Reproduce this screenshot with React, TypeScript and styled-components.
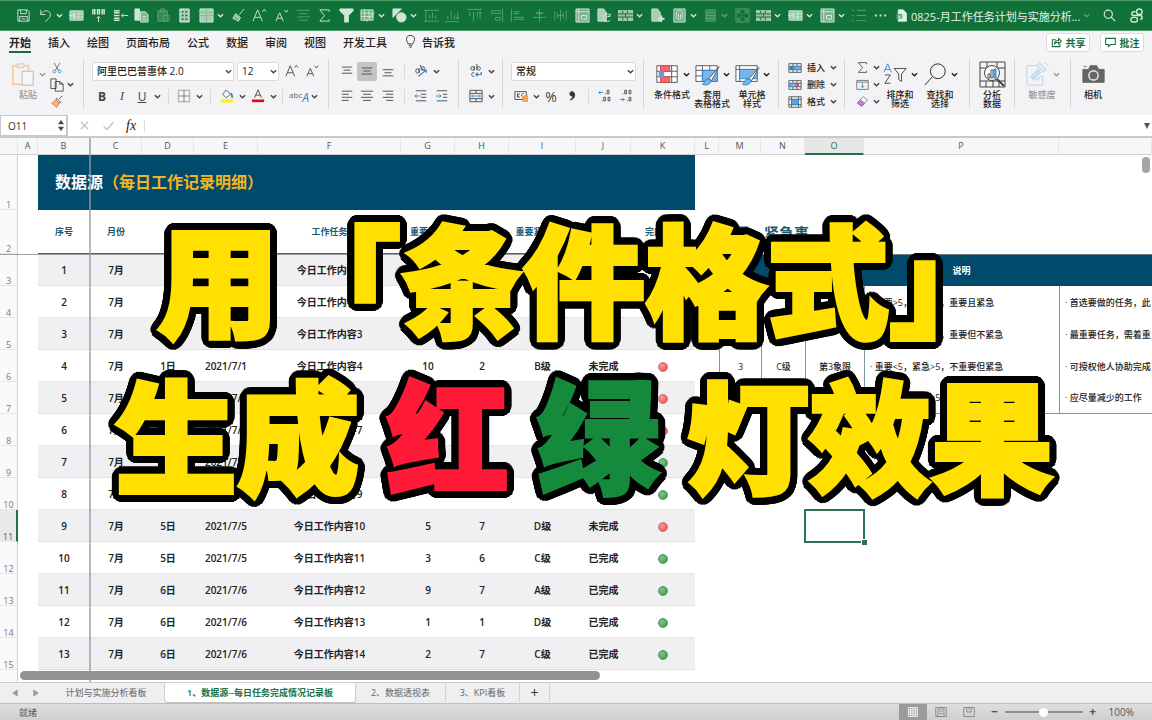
import React, { ReactNode } from 'react';
import styled, { createGlobalStyle, css } from 'styled-components';

const sans = `"Open Sans", "Noto Sans CJK SC", sans-serif`;
const green = '#117239';
const navy = '#004b6b';

const GlobalStyle = createGlobalStyle`
  * { box-sizing: border-box; }
  body { margin: 0; font-family: ${sans}; font-size: 10px; color: #222; background: #fff; }
  button { border: 0; padding: 0; margin: 0; background: none; font: inherit; color: inherit; }
  svg { display: block; flex: none; }
`;

/* ---------- glyphs ---------- */

const grid = 'M1 3h14v10H1zM1 6.3h14M1 9.6h14M5.6 3v10M10.3 3v10';

const glyphs: Record<string, ReactNode> = {
  save: <path d="M2 2h10l2 2v10H2zM5 2v4h6V2M4 14V9h8v5M6 11.500h4" />,
  undo: <path d="M3 2v5h5M3 7c2-4 6-5 8.500-3s2 5 0 7L8 14.500" />,
  gridIn: <><path d={grid} fill="currentColor" fillOpacity=".7" /><path d="M0 8h7" /></>,
  pivotUp: <><path d="M2 1v6M4 1v6M7 1v6M9 1v6M12 1v6M14 1v6" strokeWidth="1.600" /><path d="M8 15V9M6 11l2-2 2 2" /></>,
  rowsLeft: <><path d="M1 3h6M1 5h6M1 8h6M1 11h6M1 13h6" strokeWidth="1.600" /><path d="M16 8H9M11 6L9 8l2 2" /></>,
  copy: <><path d="M1 1h5v12H1z" fill="currentColor" /><path d="M7 4h5l3 3v8H7zM9 9h4M9 12h4" fill="currentColor" fillOpacity=".6" /></>,
  clip: <><path d="M2 3h10v11H2z" fill="currentColor" fillOpacity=".5" /><path d="M5 1h4v3H5zM8 8h6v6H8z" /></>,
  sheet: <><path d="M3 1h10v14H3z" fill="currentColor" fillOpacity=".8" /><path d="M5 4h2M9 4h2M5 8h2M9 8h2M5 12h2M9 12h2" stroke="#117239" strokeWidth="1.500" /></>,
  table: <><path d="M1 1h14v14H1z" fill="currentColor" fillOpacity=".8" /><path d="M8 1v14M1 8h14M1 4.500h14" stroke="#8fc2a3" /></>,
  brush: <path d="M14 1L9 7M5 6l5 4-2 4-6-3zM4 8l5 3" fill="currentColor" fillOpacity=".5" />,
  aUp: <><path d="M1 14L6 2l5 12M3 10h6" /><path d="M11 4l2-2.500L15 4" /></>,
  aDown: <><path d="M2 14l4-9 4 9M3.500 11h5" /><path d="M11 2l2 2.500L15 2" /></>,
  center: <path d="M1 2.500h14M3.500 6h9M1 9.500h14M3.500 13h9" />,
  left: <path d="M2 2.500h12M2 6h8M2 9.500h12M2 13h8" />,
  right: <path d="M2 2.500h12M6 6h8M2 9.500h12M6 13h8" />,
  vTop: <path d="M2 3.500h12M4 7h8M2 10.500h12" />,
  vMid: <path d="M2 4.500h12M4 8h8M2 11.500h12" />,
  vBot: <path d="M2 6.500h12M4 10h8M2 13.500h12" />,
  sigma: <path d="M13 4V2H3l5 6-5 6h10v-2" />,
  funnel: <path d="M1 1h14v2L10 8v7H6V8L1 3z" fill="currentColor" />,
  gridPen: <><path d="M1 2h13v11H1zM1 5.500h13M1 9h13M5 2v11M9.500 2v11" fill="currentColor" fillOpacity=".5" /><path d="M15 5l-6 8-2 1 1-2z" fill="#117239" /></>,
  shapes: <><path d="M1 1h9L1 10z" fill="currentColor" /><circle cx="10" cy="10" r="5" fill="currentColor" /></>,
  chartA: <path d="M0 2.500h16M0 14h16M2 2v12M6 11V7M9 11V5M12 11V8" />,
  chartB: <path d="M0 14.500h15M3 12V9M6.500 12V3M10 12V7M13.500 5v7M12 10l1.500 2L15 10" />,
  chartC: <path d="M0 1.500h16M3 4v5M7 4v10M11 4v6M14 12V4M12.500 6L14 4l1.500 2" />,
  alignR: <path d="M14.500 1v14M3 3h9v3H3zM7 10h5v3H7z" />,
  alignL: <path d="M1.500 1v14M4 4h6M4 6h6M4 10h11M4 12h11" />,
  alignC: <path d="M8 1v14M4 5h8M1 10h14M4 6h8" />,
  distV: <path d="M2 3v10M14 3v10M8 2v12M5 5v6M11 5v6M5 8h6" />,
  pivot: <><path d="M1 1h14v14H1z" fill="currentColor" fillOpacity=".55" /><path d="M1 4h14M4 1v14" /><path d="M7 12V8h4M12 7v5H8" stroke="#fff" /></>,
  docRefresh: <><path d="M1 1h6l3 4v9H1z" fill="currentColor" fillOpacity=".8" /><path d="M14 8a4 4 0 1 0 0 5M14 6v3h-3" /></>,
  gridBand: <><path d="M0 3h16v10H0z" fill="currentColor" fillOpacity=".7" /><path d="M0 6.300h16M0 9.600h16M5 3v3M10 3v3M8 6v4M5 10v3M10 10v3" stroke="#117239" /></>,
  docAdd: <><path d="M2 1h6l3 4v9H2z" fill="currentColor" fillOpacity=".8" /><path d="M12 8v7M8.500 11.500h7" strokeWidth="2" /></>,
  db: <><path d="M2 1h12v14H2z" fill="currentColor" fillOpacity=".5" /><path d="M5 4c0-1.500 6-1.500 6 0v7c0 1.500-6 1.500-6 0zM7 6v5M9 6v5" /></>,
  lines: <path d="M3 2h10v12H3zM3 5h10M3 8h10M3 11h10" fill="currentColor" fillOpacity=".5" />,
  expand: <path d="M1 1h14v14H1zM3 3l4 4M13 3L9 7M3 13l4-4M13 13L9 9M3 6V3h3M10 3h3v3M3 10v3h3M10 13h3v-3" />,
  list: <path d="M1 2.500h2M6 2.500h10M1 8h2M6 8h10M1 13.500h2M6 13.500h10" />,
  dots: <path d="M2 8h2M7 8h2M12 8h2" strokeWidth="2" />,
  search: <><circle cx="6.500" cy="6.500" r="5" /><path d="M10 10l5 5" /></>,
  shareUser: <><circle cx="11" cy="4" r="3" /><rect x="2" y="10" width="7" height="5" rx="2.500" /><path d="M7 4H5a2 2 0 0 0 0 4h7a2 2 0 0 1 0 4" /></>,
  file: <><path d="M4 1h6l4 4v10H4z" fill="currentColor" /><path d="M2 6h7v6H2z" fill="#5fa77b" stroke="none" /><path d="M4 8l3 3M7 8l-3 3" stroke="#fff" /></>,
  bulb: <path d="M5 11c0-2-2-3-2-5.500a5 5 0 0 1 10 0C13 8 11 9 11 11zM6 13h4M6.500 15h3" />,
  share: <path d="M7 4H2v10h11v-4M5 10c0-3 2-5 6-5V2l4 4-4 4V7.500c-3 0-4.500.500-6 2.500z" />,
  comment: <path d="M1 2h14v9H8l-3 3v-3H1z" />,
  cut: <><path d="M4 1l6 10M12 1L6 11" stroke="#555" /><circle cx="4.500" cy="12.500" r="2" stroke="#2f86c5" /><circle cx="11.500" cy="12.500" r="2" stroke="#2f86c5" /></>,
  pages: <path d="M1 1h6v11H1zM6 4h5l4 3v8H6zM11 4v3h4" fill="#f5f5f5" />,
  painter: <><path d="M14 1l-4 4M7 4l5 5-2 1-4-4z" /><path d="M6 6l4 4-3 5-6-5z" fill="#f6b77b" stroke="#d9701f" /></>,
  border: <><path d="M1.500 1.500h13v13h-13z" stroke="#999" /><path d="M8 1.500v13M1.500 8h13" stroke="#777" /></>,
  bucket: <><path d="M7 1l5 5-5 4-4-4z" stroke="#555" /><path d="M12 5c2 1 2 3 2 5" stroke="#2f86c5" strokeWidth="2" /><path d="M1 13.500h14" stroke="#ffef1f" strokeWidth="4" /></>,
  fontColor: <><path d="M4 10l4-9 4 9M5.500 7h5" /><path d="M1 13.500h14" stroke="#e00b12" strokeWidth="3" /></>,
  orient: <><ellipse cx="4" cy="8" rx="2" ry="2.500" /><path d="M6 5v5M7 1l3 6" /><circle cx="10" cy="5" r="2" /><path d="M5 14l9-7M14 10V7h-3" stroke="#2f86c5" strokeWidth="1.400" /></>,
  outdent: <><path d="M2 2h12M8 6h6M8 9.500h6M2 13.500h12" /><path d="M7 8H1M3 6L1 8l2 2" stroke="#2f86c5" /></>,
  indent: <><path d="M2 2h12M9 6h5M9 9.500h5M2 13.500h12" /><path d="M1 8h6M5 6l2 2-2 2" stroke="#2f86c5" /></>,
  wrap: <><circle cx="4" cy="5" r="2" /><path d="M6 2.500v5M9 0v7M6 10c-4-1-4 5 0 4" /><circle cx="11" cy="5" r="2" /><path d="M14 9v3H8M10 10l-2 2 2 2" stroke="#2f86c5" strokeWidth="1.400" /></>,
  merge: <><path d="M1 1.500h14v13H1zM1 5h14M1 11h14M8 1.500V5M8 11v3" /><path d="M2.500 8h11M4.500 6.500L3 8l1.500 1.500M11.500 6.500L13 8l-1.500 1.500" stroke="#2f86c5" /></>,
  currency: <><path d="M1 3h13v9H1zM4 5v5M4 7.500L7 5M4 7.500L7 10M11 5c-3 0-3 4 0 4" /><path d="M10 8h6v6h-6zM10 11h6" fill="#f6b77b" stroke="#e58a3c" /></>,
  comma: <path d="M8 3a2.500 2.500 0 0 0 0 5c1 0 1 0 1-.5C9 10 8 11 6 12.500c4-1 5-3.500 5-6C11 4.500 10 3 8 3z" fill="#333" stroke="#333" />,
  decInc: <><path d="M6 4H1M3 2L1 4l2 2" stroke="#2f86c5" /><path d="M10.500 1.500h2v4h-2zM6.500 9.500h2v4h-2zM11.500 9.500h2v4h-2zM4 13.500h1M8 5.500h1" /></>,
  decDec: <><path d="M1 12h5M4 10l2 2-2 2" stroke="#2f86c5" /><path d="M6.500 1.500h2v4h-2zM11.500 1.500h2v4h-2zM11.500 9.500h2v4h-2zM4 5.500h1M9 13.500h1" /></>,
  paste: <><path d="M2 4h17v20H2z" stroke="#f0cfa6" strokeWidth="2" fill="#f7f4f0" /><path d="M7 2h7v4H7z" stroke="#c9c9c9" fill="#eee" /><path d="M12 10h12v15H12z" stroke="#b5b5b5" fill="#f6f6f6" /></>,
  condFmt: <><path d="M2 4h22v18H2zM2 10h22M2 16h22M8 4v18M18 4v18" stroke="#555" fill="#fff" /><path d="M6 4h10v6H6zM6 16h10v6H6z" fill="#f0696c" stroke="#dd4347" /><path d="M4 10h6v6H4z" fill="#5ea0dd" stroke="none" /></>,
  tblFmt: <><path d="M1 4h23v17H1zM1 9h23M1 15h23M8 4v17M16 4v17" stroke="#555" fill="#fff" /><path d="M8 9h16v12H8z" fill="#78b5ec" stroke="#2f86c5" /><path d="M26 5L15 18l3 2z" fill="#fff" stroke="#555" /><path d="M14 18c-4 0-3 5-6 6 5 2 9 0 9-4z" fill="#78b5ec" stroke="#2f86c5" /></>,
  cellFmt: <><path d="M1 4h23v17H1zM1 8h23M5 4v17" stroke="#555" fill="#fff" /><path d="M5 8h19v10H5z" fill="#78b5ec" stroke="#2f86c5" /><path d="M26 6L15 18l3 2z" fill="#fff" stroke="#555" /><path d="M14 18c-4 0-3 5-6 6 5 2 9 0 9-4z" fill="#78b5ec" stroke="#2f86c5" /></>,
  cellIns: <><path d={grid} stroke="#555" /><path d="M2 6h12v4H2z" fill="#78b5ec" stroke="#2f86c5" /><path d="M8 8H3M5 6L3 8l2 2" stroke="#165c94" /></>,
  cellDel: <><path d={grid} stroke="#555" /><path d="M2 6h7v4H2z" fill="#78b5ec" stroke="#2f86c5" /><path d="M9 5l5 6M14 5l-5 6" stroke="#e0393e" /></>,
  cellFit: <><path d="M1 2h14v12H1zM4 2v12M12 2v12M1 5h14M1 11h14" stroke="#555" /><path d="M4 5h8v6H4z" fill="#5ea0dd" stroke="#2f86c5" /></>,
  fillDown: <><path d="M1 3h14v11H1zM1 5h14" stroke="#666" /><path d="M8 6v6M6 10l2 2 2-2" stroke="#2f86c5" /></>,
  eraser: <><path d="M9 2l5 4-7 8-5-4z" fill="#fff" stroke="#a14bb0" /><path d="M5.500 6l5 4L7 14l-5-4z" fill="#c583cf" stroke="#a14bb0" /></>,
  sortFilter: <><path d="M1 11L5 2l4 9M2.500 8h5" stroke="#2f86c5" /><path d="M2 14h6L2 23h6" stroke="#444" /><path d="M12 7h13l-5 6v8l-3-2v-6z" stroke="#444" /></>,
  find: <><circle cx="16" cy="10" r="8" /><path d="M10 16L2 25" /></>,
  analyse: <><path d="M1 1h25v25H1zM1 7h25M1 20h25M8 1v6M18 1v6M7 20v6M14 20v6M20 20v6" stroke="#444" /><circle cx="13" cy="12" r="7.500" fill="#fff" stroke="#444" /><path d="M18 18l7 7" stroke="#444" strokeWidth="2" /><path d="M9 13h2v4H9zM12 9h2v8h-2z" stroke="#555" /><path d="M15 8h2v9h-2z" fill="#78b5ec" stroke="#2f86c5" /></>,
  sens: <g stroke="#b5cfe0"><path d="M19 4H2v21h17V14" stroke="#bdd3e2" /><path d="M6 16l8-8 3 3-8 8z" fill="#cfe2f0" /><path d="M13 4l3-3 7 7-3 3zM22 1l3 3M10 17l3 3 5-5" fill="#dfecf5" /></g>,
  camera: <><path d="M2 8h6l2-4h7l2 4h6v14H2z" fill="#666" stroke="#666" strokeLinejoin="round" /><circle cx="13.500" cy="14.500" r="5" fill="#666" stroke="#f2f2f2" strokeWidth="1.500" /><path d="M3 5h3" stroke="#666" /></>,
  x: <path d="M3.500 3.500l9 9M12.500 3.500l-9 9" />,
  check: <path d="M2 9l4 4 8-9" />,
  prev: <path d="M11 4v8L5 8z" fill="currentColor" />,
  next: <path d="M5 4v8l6-4z" fill="currentColor" />,
  viewGrid: <path d="M2 2h12v12H2zM2 5h12M2 8h12M2 11h12M5 2v12M8 2v12M11 2v12" />,
  viewPage: <path d="M1 2h14v12H1zM4 4h8v10M4 4v10M6 7h4M6 10h4" />,
  viewBreak: <path d="M1 2h14v12H1zM5 2v6h6V2M8 2v3" />,
};

const Glyph = ({ name, size = 16, box = 16, weight = 1 }: { name: string; size?: number; box?: number; weight?: number }) => (
  <svg width={size} height={size} viewBox={`0 0 ${box} ${box}`} fill="none" stroke="currentColor" strokeWidth={weight} aria-hidden="true">
    {glyphs[name]}
  </svg>
);

const Chevron = ({ size = 7 }: { size?: number }) => (
  <svg width={size} height={size} viewBox="0 0 8 8" fill="none" stroke="currentColor" strokeWidth="1.600" aria-hidden="true">
    <path d="M1 2.500l3 3 3-3" />
  </svg>
);

/* ---------- window ---------- */

const Window = styled.div`
  position: relative;
  display: flex;
  flex-direction: column;
  height: 100vh;
  overflow: hidden;
`;

const TitleBar = styled.header`
  display: flex;
  align-items: center;
  flex: none;
  height: 31px;
  padding: 0 8px 0 16px;
  background: ${green};
  border-top: 1px solid #4d9a6b;
  border-bottom: 1px solid #4d9a6b;
  color: #e4f3ea;
`;

const QuickTools = styled.div`
  display: flex;
  flex: 1;
  max-width: 872px;
  align-items: center;
  justify-content: space-between;
`;

const Tool = styled.button<{ $dim?: boolean }>`
  display: flex;
  align-items: center;
  gap: 3px;
  opacity: ${(p) => (p.$dim ? 0.35 : 0.9)};
`;

const DocTitle = styled.div`
  display: flex;
  align-items: center;
  gap: 3px;
  margin-left: 7px;
  font-size: 11px;
  white-space: nowrap;
`;

const TitleActions = styled.div`
  display: flex;
  align-items: center;
  gap: 13px;
  margin-left: auto;
`;

const TabBar = styled.nav`
  display: flex;
  align-items: center;
  flex: none;
  gap: 17px;
  height: 25px;
  padding: 0 8px 2px 9px;
  background: #f4f3f5;
  font-size: 11px;
  font-weight: 500;
`;

const Tab = styled.button<{ $active?: boolean }>`
  display: flex;
  align-items: center;
  gap: 5px;
  height: 21px;
  border-bottom: 2px solid ${(p) => (p.$active ? '#1c6b3c' : 'transparent')};
  font-weight: ${(p) => (p.$active ? 700 : 500)};
  white-space: nowrap;
`;

const TabActions = styled.div`
  display: flex;
  gap: 10px;
  margin-left: auto;
`;

const Pill = styled.button`
  display: flex;
  align-items: center;
  justify-content: center;
  gap: 4px;
  width: 44px;
  height: 19px;
  border: 1px solid #dcdcdc;
  border-radius: 3px;
  background: #fff;
  color: #1c6b3c;
  font-size: 10px;
  font-weight: 700;
`;

const Ribbon = styled.div`
  display: flex;
  flex: none;
  height: 59px;
  background: #f3f2f4;
  color: #444;
`;

const Group = styled.div<{ $w: number; $last?: boolean }>`
  display: flex;
  flex: none;
  width: ${(p) => p.$w}px;
  height: 49px;
  margin-top: 3px;
  padding-left: 8px;
  ${(p) => !p.$last && 'border-right: 1px solid #d6d5d8;'}
`;

const Rows = styled.div`
  display: flex;
  flex-direction: column;
  gap: 1px;
`;

const Row = styled.div`
  display: flex;
  align-items: center;
  height: 24px;
`;

const TripleRows = styled.div`
  display: flex;
  flex-direction: column;
`;

const TripleRow = styled.div`
  display: flex;
  align-items: center;
  height: 17px;
`;

const Slot = styled.button<{ $w: number; $pressed?: boolean }>`
  display: flex;
  align-items: center;
  justify-content: center;
  flex: none;
  width: ${(p) => p.$w}px;
  height: 19px;
  font-size: 12px;
  ${(p) => p.$pressed && css`background: #c4c3c6; border-radius: 2px;`}
`;

const Mark = styled.span<{ $italic?: boolean; $under?: boolean; $bold?: boolean }>`
  font-style: ${(p) => (p.$italic ? 'italic' : 'normal')};
  font-weight: ${(p) => (p.$bold ? 700 : 400)};
  text-decoration: ${(p) => (p.$under ? 'underline' : 'none')};
  font-family: ${(p) => (p.$italic ? '"Liberation Serif", serif' : sans)};
  font-size: 12px;
`;

const Percent = styled(Mark)`
  font-size: 14px;
`;

const Abc = styled.span`
  display: flex;
  font-size: 8px;
  line-height: 12px;
  color: #666;
  em {
    color: #2f86c5;
    font-size: 12px;
    padding-top: 3px;
  }
`;

const Divider = styled.span<{ $w: number }>`
  flex: none;
  width: 1px;
  height: 15px;
  margin: 0 ${(p) => p.$w}px;
  background: #d9d8da;
`;

const Picker = styled.label<{ $w: number }>`
  position: relative;
  display: block;
  flex: none;
  width: ${(p) => p.$w}px;
  margin-right: 3px;
  select {
    appearance: none;
    width: 100%;
    height: 19px;
    padding: 0 4px;
    border: 1px solid #dad9dc;
    border-radius: 2px;
    background: #fff;
    color: #222;
    font: 500 10px ${sans};
  }
  svg {
    position: absolute;
    right: 2px;
    top: 6px;
  }
`;

const BigButton = styled.button<{ $w: number; $dim?: boolean }>`
  display: flex;
  flex-direction: column;
  align-items: center;
  flex: none;
  width: ${(p) => p.$w}px;
  font-size: 9px;
  font-weight: 500;
  line-height: 9px;
  color: ${(p) => (p.$dim ? '#999' : '#222')};
  white-space: nowrap;
`;

const BigIcon = styled.span`
  display: flex;
  align-items: center;
  gap: 3px;
  height: 31px;
`;

const SmallLabel = styled.span`
  margin: 0 5px 0 4px;
  font-size: 9px;
  font-weight: 500;
  color: #222;
`;

const FormulaBar = styled.div`
  display: flex;
  align-items: center;
  flex: none;
  height: 23px;
  border-bottom: 2px solid #c9c9cb;
  background: #fff;
  color: #bbb;
`;

const NameBox = styled.label`
  display: flex;
  align-items: center;
  width: 68px;
  height: 21px;
  border: 1px solid #c9c9cb;
  border-right-width: 2px;
  color: #333;
  input {
    width: 57px;
    border: 0;
    padding: 0 0 0 7px;
    font: 500 10px ${sans};
    color: #333;
    outline: 0;
  }
`;

const Fx = styled.span`
  width: 18px;
  font: italic 400 14px "Liberation Serif", serif;
  color: #222;
`;

const FormulaInput = styled.input`
  flex: 1;
  height: 12px;
  border: 0;
  border-left: 1px solid #ddd;
  outline: 0;
`;

/* ---------- sheet ---------- */

const SheetArea = styled.main`
  position: relative;
  flex: 1;
  min-height: 0;
  overflow: hidden;
  background: #fff;
`;

const Sheet = styled.table`
  width: 100%;
  table-layout: fixed;
  border-collapse: separate;
  border-spacing: 0;
  font-size: 10px;
  font-weight: 600;
  td, th {
    padding: 0;
    overflow: hidden;
    white-space: nowrap;
    text-align: center;
  }
`;

const ColHead = styled.th<{ $on?: boolean }>`
  height: 17px;
  border-right: 1px solid #e6e5e7;
  border-bottom: ${(p) => (p.$on ? `2px solid #217346` : '1px solid #cfced0')};
  background: ${(p) => (p.$on ? '#e6e6e7' : '#f7f6f8')};
  color: ${(p) => (p.$on ? '#217346' : '#555')};
  font-size: 9px;
  font-weight: 500;
  line-height: 14px;
`;

const RowHead = styled.th<{ $on?: boolean }>`
  border-right: ${(p) => (p.$on ? '2px solid #217346' : '1px solid #cfced0')};
  border-bottom: 1px solid #e6e5e7;
  background: ${(p) => (p.$on ? '#e9e9ea' : '#fafafa')};
  color: ${(p) => (p.$on ? '#217346' : '#777')};
  vertical-align: bottom;
  font-size: 9px;
  font-weight: 400;
  line-height: 9px;
`;

const SheetRow = styled.tr<{ $h: number }>`
  height: ${(p) => p.$h}px;
`;

const TitleCell = styled.td`
  && {
    padding: 0 0 4px 17px;
    text-align: left;
  }
  background: ${navy};
  color: #fff;
  font-size: 16px;
  font-weight: 700;
  span { color: #f2b41f; }
`;

const FieldHead = styled.th`
  border-bottom: 1px solid #4c6673;
  color: #1c5872;
  font-size: 9px;
  font-weight: 700;
`;

const Cell = styled.td<{ $shade?: boolean }>`
  border-bottom: 1px solid #e3e3e5;
  background: ${(p) => (p.$shade ? '#f0f0f3' : '#fff')};
`;

const GuideTitle = styled.td`
  && { text-align: left; overflow: visible; }
  color: #1c5872;
  font-size: 15px;
  font-weight: 700;
`;

const GuideHead = styled.th`
  background: ${navy};
  color: #fff;
  font-size: 9px;
  font-weight: 700;
`;

const GuideCell = styled.td<{ $note?: boolean; $end?: boolean }>`
  border-left: 1px solid #7c98a8;
  ${(p) => p.$end && 'border-bottom: 1px solid #7c98a8;'}
  ${(p) => p.$note && '&& { text-align: left; padding-left: 5px; }'}
  font-size: 9px;
  font-weight: 500;
`;

const ActiveCell = styled.td`
  && { overflow: visible; }
  position: relative;
  &::before {
    content: '';
    position: absolute;
    inset: -1px;
    border: 2px solid #2f7553;
  }
  &::after {
    content: '';
    position: absolute;
    right: -3px;
    bottom: -3px;
    width: 5px;
    height: 5px;
    background: #2f7553;
    border: 1px solid #fff;
    border-width: 1px 0 0 1px;
  }
`;

const Light = styled.span<{ $done: boolean }>`
  display: inline-block;
  width: 10px;
  height: 10px;
  border-radius: 50%;
  border: 1px solid ${(p) => (p.$done ? '#4a9c5d' : '#d9696d')};
  background: ${(p) => (p.$done ? 'radial-gradient(circle at 35% 35%, #7cc48a, #2f9a4b)' : 'radial-gradient(circle at 35% 35%, #f79a9b, #e5484d)')};
  vertical-align: middle;
`;

const FreezeV = styled.i`
  position: absolute;
  left: 89px;
  top: 0;
  bottom: 0;
  width: 2px;
  background: rgba(150, 152, 158, 0.7);
`;

const FreezeH = styled.i`
  position: absolute;
  left: 0;
  right: 0;
  top: 116px;
  height: 1px;
  background: rgba(130, 138, 144, 0.8);
`;

const ScrollX = styled.i`
  position: absolute;
  left: 20px;
  bottom: 2px;
  width: 580px;
  height: 9px;
  border-radius: 5px;
  background: #939394;
`;

const ScrollY = styled.i`
  position: absolute;
  right: 2px;
  top: 19px;
  width: 8px;
  height: 16px;
  border-radius: 4px;
  background: #a4a4a6;
`;

const SheetTabs = styled.div`
  display: flex;
  flex: none;
  height: 21px;
  padding-left: 6px;
  border-top: 1px solid #cdcdcf;
  background: #efeef0;
  color: #999;
`;

const SheetTab = styled.button<{ $w: number; $active?: boolean }>`
  width: ${(p) => p.$w}px;
  height: 19px;
  border-right: 1px solid #d2d2d4;
  background: ${(p) => (p.$active ? '#fff' : 'transparent')};
  color: ${(p) => (p.$active ? '#217346' : '#666')};
  font-size: 9px;
  font-weight: ${(p) => (p.$active ? 600 : 400)};
  white-space: nowrap;
  ${(p) => p.$active && 'border-radius: 0 0 3px 3px; box-shadow: 0 1px 1px #bbb;'}
`;

const AddTab = styled(SheetTab)`
  color: #333;
  font-size: 14px;
  line-height: 14px;
`;

const StatusBar = styled.footer`
  display: flex;
  align-items: center;
  flex: none;
  height: 17px;
  padding: 0 18px 0 19px;
  border-top: 1px solid #bdbdbf;
  background: linear-gradient(#dededf, #cfcfd0);
  color: #555;
  font-size: 9px;
`;

const Views = styled.div`
  display: flex;
  margin-left: auto;
`;

const ViewButton = styled.button<{ $on?: boolean }>`
  display: flex;
  align-items: center;
  justify-content: center;
  width: 28px;
  height: 16px;
  background: ${(p) => (p.$on ? '#9b9b9d' : 'transparent')};
  color: ${(p) => (p.$on ? '#fff' : '#777')};
`;

const Zoom = styled.div`
  display: flex;
  align-items: center;
  gap: 6px;
  margin-left: 8px;
  font-size: 10px;
  input {
    appearance: none;
    width: 78px;
    height: 2px;
    margin: 0;
    background: #8f8f91;
  }
  input::-webkit-slider-thumb {
    appearance: none;
    width: 9px;
    height: 9px;
    border-radius: 50%;
    background: #fff;
  }
  output { margin-left: 6px; }
`;

const ZoomStep = styled.button`
  width: 8px;
  font-size: 12px;
  font-weight: 700;
  line-height: 12px;
`;

/* ---------- headline ---------- */

const ring = (radius: number, steps: number) => Array.from({ length: steps }, (_, i) => {
  const a = (i * 2 * Math.PI) / steps;
  return `${Math.round(Math.cos(a) * radius * 10) / 10}px ${Math.round(Math.sin(a) * radius * 10) / 10}px 0 #000`;
}).join(', ');

const Headline = styled.h1`
  position: absolute;
  top: 197px;
  left: 0;
  right: 0;
  margin: 0;
  padding-left: 16px;
  color: #ffe000;
  font-family: "Noto Sans CJK SC", sans-serif;
  font-size: 122px;
  font-weight: 900;
  line-height: 156px;
  text-align: center;
  white-space: nowrap;
  -webkit-text-stroke: 4px currentColor;
  text-shadow: ${ring(9, 48)}, ${ring(5, 24)};
  pointer-events: none;
`;

const HeadLine = styled.span`
  display: block;
`;

const Tint = styled.span<{ $c: string }>`
  color: ${(p) => p.$c};
`;

/* ---------- data ---------- */

const tools: [string, boolean?, boolean?][] = [
  ['save'], ['undo', true], ['gridIn'], ['pivotUp'], ['rowsLeft'], ['copy'], ['clip', false, true], ['sheet'], ['table', true],
  ['brush'], ['aUp'], ['aDown'], ['center', false, true], ['sigma'], ['funnel'], ['gridPen', true], ['shapes', true], ['chartA', false, true],
  ['chartB', false, true], ['chartC', false, true], ['alignR', false, true], ['alignL', false, true], ['alignC', false, true],
  ['distV', false, true], ['pivot'], ['docRefresh'], ['gridBand', true], ['docAdd'], ['db', true], ['lines', true, true],
  ['expand', false, true], ['gridBand', true], ['gridIn', true], ['pivot', true], ['list', false, true], ['dots'],
];

const tabs = ['开始', '插入', '绘图', '页面布局', '公式', '数据', '审阅', '视图', '开发工具'];

const cols: [string, number?][] = [
  ['A', 20], ['B', 52], ['C', 52], ['D', 52], ['E', 64], ['F', 143], ['G', 54], ['H', 54], ['I', 67], ['J', 55], ['K', 64],
  ['L', 24], ['M', 42], ['N', 44], ['O', 59], ['P', 195], ['', undefined],
];

const fields = ['序号', '月份', '', '', '工作任务', '重要程度', '', '重要紧急级别', '', '完成情况'];

const records: (string | boolean)[][] = [
  ['1', '7月', '', '', '今日工作内容1', '', '', '', '', ''],
  ['2', '7月', '', '', '今日工作内容2', '', '', '', '', ''],
  ['3', '7月', '', '', '今日工作内容3', '', '', '', '', ''],
  ['4', '7月', '1日', '2021/7/1', '今日工作内容4', '10', '2', 'B级', '未完成', false],
  ['5', '7月', '', '2021/7/2', '今日工作内容5', '', '', '', '', false],
  ['6', '7月', '', '2021/7/2', '今日工作内容7', '', '6', '', '', false],
  ['7', '7月', '', '2021/7/2', '今日工作内容8', '', '9', '', '', true],
  ['8', '7月', '', '2021/7/5', '今日工作内容9', '', '', '', '', true],
  ['9', '7月', '5日', '2021/7/5', '今日工作内容10', '5', '7', 'D级', '未完成', false],
  ['10', '7月', '5日', '2021/7/5', '今日工作内容11', '3', '6', 'C级', '已完成', true],
  ['11', '7月', '6日', '2021/7/6', '今日工作内容12', '9', '7', 'A级', '已完成', true],
  ['12', '7月', '6日', '2021/7/6', '今日工作内容13', '1', '1', 'D级', '已完成', true],
  ['13', '7月', '6日', '2021/7/6', '今日工作内容14', '2', '7', 'C级', '已完成', true],
];

const guide = [
  ['', '', '', '· 重要>5，紧急>5，重要且紧急', '· 首选要做的任务，此'],
  ['', '', '', '· 重要>5，紧急<5，重要但不紧急', '· 最重要任务，需着重'],
  ['3', 'C级', '第3象限', '· 重要<5，紧急>5，不重要但紧急', '· 可授权他人协助完成'],
  ['', '', '', '· 重要<5，紧急<5', '· 应尽量减少的工作'],
];

/* ---------- parts ---------- */

const IconSlot = ({ w, name, size = 14, pressed }: { w: number; name: string; size?: number; pressed?: boolean }) => (
  <Slot $w={w} $pressed={pressed} aria-label={name}><Glyph name={name} size={size} /></Slot>
);

const Drop = ({ w = 8 }: { w?: number }) => <Slot $w={w} aria-label="更多"><Chevron /></Slot>;

const Big = ({ w, name, lines, drop, dim, size = 25 }: { w: number; name: string; lines: string[]; drop?: boolean; dim?: boolean; size?: number }) => (
  <BigButton $w={w} $dim={dim}>
    <BigIcon><Glyph name={name} size={size} box={27} />{drop && <Chevron />}</BigIcon>
    {lines.map((l) => <span key={l}>{l}</span>)}
  </BigButton>
);

const RibbonBar = () => (
  <Ribbon>
    <Group $w={84}>
      <Big w={40} name="paste" lines={['粘贴']} drop dim />
      <TripleRows>
        <TripleRow><IconSlot w={18} name="cut" size={12} /></TripleRow>
        <TripleRow><IconSlot w={18} name="pages" /><Drop w={9} /></TripleRow>
        <TripleRow><IconSlot w={18} name="painter" size={13} /></TripleRow>
      </TripleRows>
    </Group>
    <Group $w={245}>
      <Rows>
        <Row>
          <Picker $w={142}><select aria-label="字体"><option>阿里巴巴普惠体 2.0</option></select><Chevron /></Picker>
          <Picker $w={42}><select aria-label="字号"><option>12</option></select><Chevron /></Picker>
          <IconSlot w={20} name="aUp" /><IconSlot w={20} name="aDown" />
        </Row>
        <Row>
          <Slot $w={20}><Mark $bold>B</Mark></Slot><Slot $w={20}><Mark $italic>I</Mark></Slot><Slot $w={20}><Mark $under>U</Mark></Slot>
          <Drop w={10} /><Divider $w={6} />
          <IconSlot w={18} name="border" /><Drop w={12} /><Divider $w={5} />
          <IconSlot w={22} name="bucket" /><Drop /><IconSlot w={23} name="fontColor" /><Drop /><Divider $w={5} />
          <Slot $w={22}><Abc>abc<em>A</em></Abc></Slot><Drop />
        </Row>
      </Rows>
    </Group>
    <Group $w={130}>
      <Rows>
        <Row>
          <IconSlot w={20} name="vTop" /><IconSlot w={20} name="vMid" pressed /><IconSlot w={22} name="vBot" />
          <Divider $w={5} /><IconSlot w={22} name="orient" /><Drop />
        </Row>
        <Row>
          <IconSlot w={20} name="left" /><IconSlot w={20} name="center" /><IconSlot w={22} name="right" />
          <Divider $w={5} /><IconSlot w={22} name="outdent" /><IconSlot w={20} name="indent" />
        </Row>
      </Rows>
    </Group>
    <Group $w={44}>
      <Rows>
        <Row><IconSlot w={18} name="wrap" /><Drop w={12} /></Row>
        <Row><IconSlot w={18} name="merge" /><Drop w={12} /></Row>
      </Rows>
    </Group>
    <Group $w={141}>
      <Rows>
        <Row><Picker $w={125}><select aria-label="数字格式"><option>常规</option></select><Chevron /></Picker></Row>
        <Row>
          <IconSlot w={20} name="currency" /><Drop w={10} /><Slot $w={20}><Percent>%</Percent></Slot>
          <IconSlot w={22} name="comma" /><Divider $w={5} />
          <IconSlot w={22} name="decInc" /><IconSlot w={20} name="decDec" />
        </Row>
      </Rows>
    </Group>
    <Group $w={135}>
      <Big w={40} name="condFmt" lines={['条件格式']} drop />
      <Big w={40} name="tblFmt" lines={['套用', '表格格式']} drop />
      <Big w={40} name="cellFmt" lines={['单元格', '样式']} drop />
    </Group>
    <Group $w={66}>
      <TripleRows>
        {[['cellIns', '插入'], ['cellDel', '删除'], ['cellFit', '格式']].map(([icon, label]) => (
          <TripleRow key={icon}><IconSlot w={16} name={icon} /><SmallLabel>{label}</SmallLabel><Chevron /></TripleRow>
        ))}
      </TripleRows>
    </Group>
    <Group $w={125}>
      <TripleRows>
        {['sigma', 'fillDown', 'eraser'].map((icon) => (
          <TripleRow key={icon}><IconSlot w={18} name={icon} size={13} /><Drop w={10} /></TripleRow>
        ))}
      </TripleRows>
      <Big w={38} name="sortFilter" lines={['排序和', '筛选']} drop />
      <Big w={42} name="find" lines={['查找和', '选择']} drop />
    </Group>
    <Group $w={45}><Big w={28} name="analyse" lines={['分析', '数据']} size={27} /></Group>
    <Group $w={56}><Big w={38} name="sens" lines={['敏感度']} drop dim /></Group>
    <Group $w={60} $last><Big w={28} name="camera" lines={['相机']} /></Group>
  </Ribbon>
);

const Grid = () => (
  <Sheet>
    <colgroup>
      <col style={{ width: 18 }} />
      {cols.map(([name, w]) => <col key={name} style={{ width: w }} />)}
    </colgroup>
    <thead>
      <tr>
        <ColHead />
        {cols.map(([name]) => <ColHead key={name} $on={name === 'O'}>{name}</ColHead>)}
      </tr>
    </thead>
    <tbody>
      <SheetRow $h={55}>
        <RowHead>1</RowHead><td />
        <TitleCell colSpan={10}>数据源<span>（每日工作记录明细）</span></TitleCell>
        <td colSpan={6} />
      </SheetRow>
      <SheetRow $h={44}>
        <RowHead>2</RowHead><td />
        {fields.map((f, i) => <FieldHead key={i}>{f}</FieldHead>)}
        <td /><GuideTitle colSpan={5}>重要、紧急事</GuideTitle>
      </SheetRow>
      {records.map((r, i) => {
        const g = guide[i - 1];
        return (
          <SheetRow $h={32} key={i}>
            <RowHead $on={i === 8}>{i + 3}</RowHead><td />
            {r.map((v, j) => (
              <Cell key={j} $shade={i % 2 === 0}>{typeof v === 'boolean' ? <Light $done={v} /> : v}</Cell>
            ))}
            <td />
            {i === 0 && ['', '', '', '说明', ''].map((h, j) => <GuideHead key={j}>{h}</GuideHead>)}
            {g && g.map((v, j) => <GuideCell key={j} $note={j > 2} $end={i === 4}>{v}</GuideCell>)}
            {i === 8 && <><td /><td /><ActiveCell /><td /><td /></>}
            {i > 4 && i !== 8 && <td colSpan={5} />}
          </SheetRow>
        );
      })}
      <SheetRow $h={32}><RowHead /><td colSpan={17} /></SheetRow>
    </tbody>
  </Sheet>
);

export default function App() {
  return (
    <Window>
      <GlobalStyle />
      <TitleBar>
        <QuickTools>
          {tools.map(([name, drop, dim], i) => (
            <Tool key={i} $dim={dim} aria-label={name}><Glyph name={name} size={15} />{drop && <Chevron />}</Tool>
          ))}
        </QuickTools>
        <DocTitle><Glyph name="file" size={13} />0825-月工作任务计划与实施分析...</DocTitle>
        <TitleActions>
          <Tool $dim aria-label="文件菜单"><Chevron /></Tool>
          <Tool aria-label="search"><Glyph name="search" size={13} weight={1.5} /></Tool>
          <Tool aria-label="people"><Glyph name="shareUser" size={15} weight={1.5} /></Tool>
        </TitleActions>
      </TitleBar>
      <TabBar>
        {tabs.map((t, i) => <Tab key={t} $active={i === 0}>{t}</Tab>)}
        <Tab><Glyph name="bulb" size={13} />告诉我</Tab>
        <TabActions>
          <Pill><Glyph name="share" size={11} weight={1.5} />共享</Pill>
          <Pill><Glyph name="comment" size={11} weight={1.5} />批注</Pill>
        </TabActions>
      </TabBar>
      <RibbonBar />
      <FormulaBar>
        <NameBox>
          <input aria-label="名称框" defaultValue="O11" />
          <svg width="6" height="13" viewBox="0 0 7 13" fill="#444" aria-hidden="true"><path d="M0 5l3.500-5L7 5zM0 8l3.500 5L7 8z" /></svg>
        </NameBox>
        <Slot $w={32} aria-label="取消"><Glyph name="x" size={13} weight={1.5} /></Slot>
        <Slot $w={16} aria-label="输入"><Glyph name="check" size={13} weight={1.5} /></Slot>
        <Slot $w={10} />
        <Fx>fx</Fx>
        <FormulaInput aria-label="编辑栏" />
        <svg width="9" height="6" viewBox="0 0 9 6" fill="#555" aria-hidden="true"><path d="M1 0h6L4 6z" /></svg>
      </FormulaBar>
      <SheetArea>
        <Grid />
        <FreezeV /><FreezeH /><ScrollX /><ScrollY />
      </SheetArea>
      <SheetTabs>
        <Slot $w={17} aria-label="上一个"><Glyph name="prev" size={12} /></Slot>
        <Slot $w={25} aria-label="下一个"><Glyph name="next" size={12} /></Slot>
        <SheetTab $w={117}>计划与实施分析看板</SheetTab>
        <SheetTab $w={191} $active>1、数据源--每日任务完成情况记录板</SheetTab>
        <SheetTab $w={90}>2、数据透视表</SheetTab>
        <SheetTab $w={74}>3、KPI看板</SheetTab>
        <AddTab $w={30} aria-label="新建">+</AddTab>
      </SheetTabs>
      <StatusBar>
        <span>就绪</span>
        <Views>
          <ViewButton $on aria-label="普通"><Glyph name="viewGrid" size={12} /></ViewButton>
          <ViewButton aria-label="页面布局"><Glyph name="viewPage" size={12} /></ViewButton>
          <ViewButton aria-label="分页预览"><Glyph name="viewBreak" size={12} /></ViewButton>
        </Views>
        <Zoom>
          <ZoomStep>−</ZoomStep>
          <input type="range" aria-label="缩放" defaultValue={50} />
          <ZoomStep>+</ZoomStep>
          <output>100%</output>
        </Zoom>
      </StatusBar>
      <Headline>
        <HeadLine>用「条件格式」</HeadLine>
        <HeadLine>生成 <Tint $c="#ff1a37">红</Tint> <Tint $c="#168a3c">绿</Tint> 灯效果</HeadLine>
      </Headline>
    </Window>
  );
}
